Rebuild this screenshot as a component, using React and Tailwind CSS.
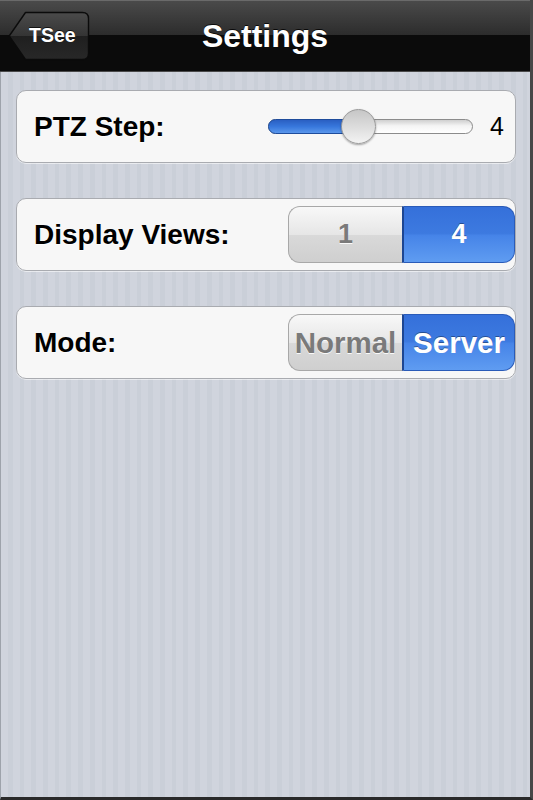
import React from "react";

function BackButton() {
  return (
    <div className="relative w-[82px] h-[50px] flex items-center">
      <svg className="absolute inset-0" width="82" height="50" viewBox="0 0 82 50">
        <defs>
          <linearGradient id="bb" x1="0" y1="0" x2="0" y2="1">
            <stop offset="0" stopColor="#4b4b4b" />
            <stop offset="0.5" stopColor="#343434" />
            <stop offset="0.5" stopColor="#1f1f1f" />
            <stop offset="1" stopColor="#282828" />
          </linearGradient>
        </defs>
        <path
          d="M17.5 1.5 H74.5 Q80.5 1.5 80.5 7.5 V42.5 Q80.5 48.5 74.5 48.5 H17.5 L1.2 25 Z"
          fill="url(#bb)"
          stroke="#0b0b0b"
          strokeWidth="1.4"
          strokeLinejoin="round"
        />
      </svg>
      <span className="relative pl-[21px] text-white font-bold text-[19.5px] leading-none [font-family:'Liberation_Sans',Arial,sans-serif] [text-shadow:0_-1px_0_rgba(0,0,0,0.7)]">
        TSee
      </span>
    </div>
  );
}

function Card({ children }) {
  return (
    <div className="h-[73px] rounded-[10px] border border-[#a9abb0] bg-[#f7f7f7] flex items-center shadow-[0_1px_0_rgba(255,255,255,0.55)]">
      {children}
    </div>
  );
}

function Label({ children }) {
  return (
    <span className="pl-[17px] text-black font-bold text-[28px] leading-none [font-family:'Liberation_Sans',Arial,sans-serif] [text-shadow:0_1px_0_rgba(255,255,255,0.8)]">
      {children}
    </span>
  );
}

function Segmented({ left, right, size }) {
  return (
    <div className="ml-auto flex w-[227px] h-[57px]">
      <div
        className={`flex-1 flex items-center justify-center rounded-l-[12px] border border-r-0 border-[#a8a8a8] bg-[linear-gradient(#f8f8f8,#e6e6e6_50%,#d9d9d9_51%,#cfcfcf)] text-[#7a7a7a] font-bold leading-none [font-family:'Liberation_Sans',Arial,sans-serif] [text-shadow:0_1px_0_rgba(255,255,255,0.9)] ${size}`}
      >
        {left}
      </div>
      <div
        className={`w-[113px] flex items-center justify-center rounded-r-[12px] border border-[#2a5bb8] border-l-2 border-l-[#1d4692] bg-[linear-gradient(#3570da,#3d7ae0_48%,#4684e8_52%,#5f9cf1)] text-white font-bold leading-none [font-family:'Liberation_Sans',Arial,sans-serif] [text-shadow:0_-1px_0_rgba(0,0,0,0.35)] ${size}`}
      >
        {right}
      </div>
    </div>
  );
}

function Slider() {
  return (
    <div className="ml-auto flex items-center">
      <div className="relative w-[205px] h-[15px] rounded-full border border-[#8c8c8c] bg-[linear-gradient(#cfcfcf,#f4f4f4_45%,#ffffff)]">
        <div className="absolute left-[-1px] top-[-1px] h-[15px] w-[90px] rounded-l-full border border-[#1e4c9c] bg-[linear-gradient(#2a5fc2,#3777dc_50%,#5a97ec)]" />
        <div className="absolute left-[72px] top-[-11px] w-[35px] h-[35px] rounded-full border border-[#9a9a9a] bg-[linear-gradient(#c6c6c6,#dcdcdc_50%,#f3f3f3)] shadow-[0_1px_2px_rgba(0,0,0,0.35)]" />
      </div>
      <span className="ml-[17px] mr-[11px] text-black text-[25px] leading-none [font-family:'Liberation_Sans',Arial,sans-serif]">
        4
      </span>
    </div>
  );
}

export default function App() {
  return (
    <div className="w-[533px] h-[800px] flex flex-col border-l border-l-[#9ea3ab] border-r-[3px] border-r-[#474747] border-b-[3px] border-b-[#2a2a2a] bg-[repeating-linear-gradient(90deg,#d0d4dd_0px,#d0d4dd_7px,#cacfd8_7px,#cacfd8_11.7px)]">
      <div className="h-[72px] shrink-0 grid grid-cols-[1fr_auto_1fr] items-center border-t border-t-[#6a6a6a] border-b border-b-[#4a4a4a] bg-[linear-gradient(#4a4a4a,#2c2c2c_49%,#0b0b0b_49%,#0b0b0b)] -ml-px">
        <div className="pl-[8px] flex">
          <BackButton />
        </div>
        <div className="text-white font-bold text-[32px] leading-none [font-family:'Liberation_Sans',Arial,sans-serif] [text-shadow:0_-1px_0_rgba(0,0,0,0.8)] pb-[1px]">
          Settings
        </div>
        <div />
      </div>
      <div className="flex flex-col gap-[35px] pt-[18px] pl-[15px] pr-[14px]">
        <Card>
          <Label>PTZ Step:</Label>
          <Slider />
        </Card>
        <Card>
          <Label>Display Views:</Label>
          <Segmented left="1" right="4" size="text-[27px]" />
        </Card>
        <Card>
          <Label>Mode:</Label>
          <Segmented left="Normal" right="Server" size="text-[29.5px]" />
        </Card>
      </div>
    </div>
  );
}
